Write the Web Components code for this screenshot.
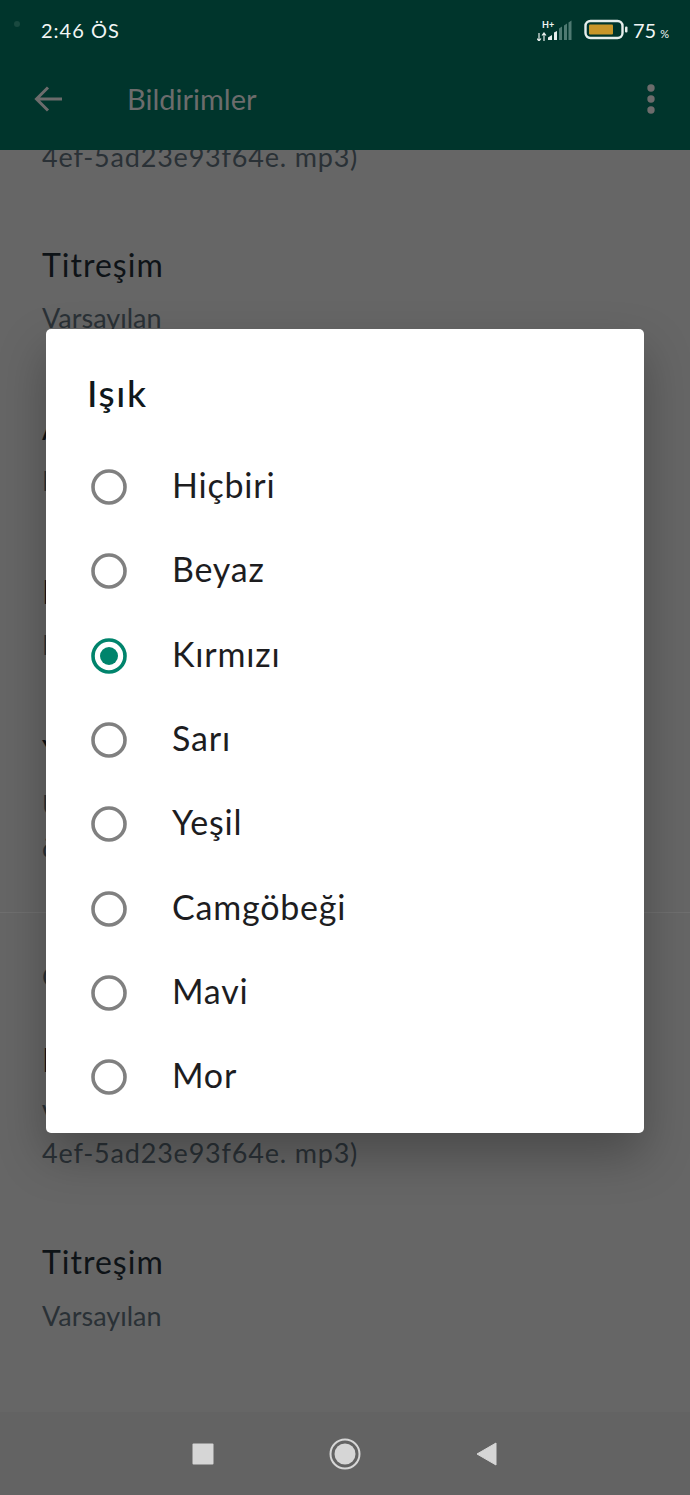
<!DOCTYPE html>
<html lang="tr">
<head>
<meta charset="utf-8">
<title>Bildirimler</title>
<style>
html, body { margin: 0; padding: 0; }
body { width: 690px; height: 1495px; overflow: hidden; position: relative; display: flex; flex-direction: column; background: #666; font-family: "Lato", "Noto Sans", sans-serif; }
</style>
</head>
<body>
<top-bar title-text="Bildirimler"></top-bar>
<settings-list>
    <setting-row clip wide summary="4ef-5ad23e93f64e. mp3)"></setting-row>
    <setting-row gap="67" name="Titreşim" summary="Varsayılan"></setting-row>
    <setting-row gap="69" name="Açılır" summary="Bildirim"></setting-row>
    <setting-row gap="70" name="Işık" summary="Beyaz"></setting-row>
    <setting-row gap="66" name="Yüksek" summary="Üst"></setting-row>
    <setting-row gap="5" summary="önizleme"></setting-row>
    <list-divider></list-divider>
    <setting-row gap="45" summary="Gruplar"></setting-row>
    <setting-row gap="42" sumgap="14" name="Bildirim" summary="Varsayılan"></setting-row>
    <setting-row wide summary="4ef-5ad23e93f64e. mp3)"></setting-row>
    <setting-row gap="68" sumgap="13" name="Titreşim" summary="Varsayılan"></setting-row>
</settings-list>
<nav-bar></nav-bar>
<radio-dialog heading="Işık">
    <radio-option>Hiçbiri</radio-option>
    <radio-option>Beyaz</radio-option>
    <radio-option checked>Kırmızı</radio-option>
    <radio-option>Sarı</radio-option>
    <radio-option>Yeşil</radio-option>
    <radio-option>Camgöbeği</radio-option>
    <radio-option>Mavi</radio-option>
    <radio-option>Mor</radio-option>
</radio-dialog>

<script>
// --- Header: status bar + toolbar ---
class TopBar extends HTMLElement {
    constructor() { super(); this.attachShadow({ mode: 'open' }); }
    connectedCallback() {
        this.shadowRoot.innerHTML = `
            <style>
                :host { display: block; flex: none; height: 150px; background: #00352c; }
                .status { height: 62px; display: flex; align-items: center; padding: 0 21px 2px 14px; box-sizing: border-box; color: #f2f6f5; }
                .dot { width: 6px; height: 6px; border-radius: 50%; background: #19493f; margin-top: -13px; }
                .time { margin-left: 21px; font-size: 20px; letter-spacing: 1px; }
                .right { margin-left: auto; display: flex; align-items: center; }
                .net { position: relative; width: 38px; height: 22px; }
                .net span { position: absolute; left: 5px; top: 1px; font-size: 9px; line-height: 10px; font-weight: 700; }
                .pct { font-size: 20px; margin-left: 5px; }
                .pct small { font-size: 11px; margin-left: 4px; }
                .tool { height: 88px; display: flex; align-items: center; padding-left: 34px; color: #6c6c6c; box-sizing: border-box; padding-bottom: 15px; }
                .title { font-size: 29px; margin-left: 63px; }
                .more { margin-left: auto; margin-right: 35px; }
            </style>
            <div class="status">
                <span class="dot"></span>
                <span class="time">2:46 ÖS</span>
                <div class="right">
                    <div class="net">
                        <span>H+</span>
                        <svg width="38" height="22" viewBox="0 0 38 22">
                            <path d="M2 14v8M0 19.5l2 2.5 2-2.5M7 22v-8M5 16.5l2-2.5 2 2.500" stroke="#e8efed" stroke-width="1.2" fill="none"/>
                            <path d="M11 21v-2.5l4-2.5v5zM17 21v-7.5l3-1.5v9z" fill="#e8efed"/>
                            <path d="M22 21V9.500l3-2v13.500zM27 21V6.500l3-2V21zM31.500 21V3.500l3-2V21z" fill="#4f7a72"/>
                        </svg>
                    </div>
                    <svg width="44" height="22" viewBox="0 0 44 22" style="margin-left:9px">
                        <rect x="1.500" y="2" width="37" height="17" rx="5" fill="none" stroke="#e6eeec" stroke-width="2.400"/>
                        <rect x="5" y="5.500" width="24" height="10" rx="1" fill="#c9962a"/>
                        <rect x="41" y="7.500" width="2.500" height="6" rx="1" fill="#e6eeec"/>
                    </svg>
                    <span class="pct">75<small>%</small></span>
                </div>
            </div>
            <div class="tool">
                <svg width="30" height="28" viewBox="0 0 30 28">
                    <path d="M28 14H3M14 2.500 2.500 14 14 25.500" fill="none" stroke="#6c6c6c" stroke-width="3"/>
                </svg>
                <span class="title">${this.getAttribute('title-text')}</span>
                <svg class="more" width="8" height="30" viewBox="0 0 8 30">
                    <circle cx="4" cy="4" r="3.700" fill="#6c6c6c"/>
                    <circle cx="4" cy="15" r="3.700" fill="#6c6c6c"/>
                    <circle cx="4" cy="26" r="3.700" fill="#6c6c6c"/>
                </svg>
            </div>`;
    }
}
customElements.define('top-bar', TopBar);

// --- Dimmed list behind the dialog ---
class SettingsList extends HTMLElement {
    constructor() { super(); this.attachShadow({ mode: 'open' }); }
    connectedCallback() {
        this.shadowRoot.innerHTML = `
            <style>
                :host { display: block; flex: 1; min-height: 0; overflow: hidden; background: #666; }
            </style>
            <slot></slot>`;
    }
}
customElements.define('settings-list', SettingsList);

class SettingRow extends HTMLElement {
    constructor() { super(); this.attachShadow({ mode: 'open' }); }
    connectedCallback() {
        const name = this.getAttribute('name');
        const gap = this.getAttribute('gap') || 0;
        const sumgap = this.getAttribute('sumgap') || 12;
        this.shadowRoot.innerHTML = `
            <style>
                :host { display: block; padding: ${gap}px 42px 0 42px; }
                :host([clip]) { margin-top: -12px; }
                .name { font-size: 32px; line-height: 44px; letter-spacing: 1px; color: #0e1317; margin-bottom: ${sumgap}px; }
                .sum { font-size: 27px; line-height: 38px; color: #2a3136; }
                :host([wide]) .sum { letter-spacing: .8px; }
            </style>
            ${name ? `<div class="name">${name}</div>` : ''}
            <div class="sum">${this.getAttribute('summary')}</div>`;
    }
}
customElements.define('setting-row', SettingRow);

class ListDivider extends HTMLElement {
    constructor() { super(); this.attachShadow({ mode: 'open' }); }
    connectedCallback() {
        this.shadowRoot.innerHTML = `<style>:host { display: block; height: 1px; margin-top: 45px; background: #6f6f6f; }</style>`;
    }
}
customElements.define('list-divider', ListDivider);

// --- Android navigation bar ---
class NavBar extends HTMLElement {
    constructor() { super(); this.attachShadow({ mode: 'open' }); }
    connectedCallback() {
        this.shadowRoot.innerHTML = `
            <style>
                :host { display: flex; flex: none; height: 83px; background: #636363; align-items: center; justify-content: center; gap: 115px; padding-right: 2px; }
                svg { display: block; }
            </style>
            <svg width="22" height="22" viewBox="0 0 22 22"><rect x="0.500" y="0.500" width="21" height="21" rx="1" fill="#d6d6d6"/></svg>
            <svg width="32" height="32" viewBox="0 0 32 32">
                <circle cx="16" cy="16" r="14.500" fill="none" stroke="#d6d6d6" stroke-width="2"/>
                <circle cx="16" cy="16" r="10.500" fill="#d6d6d6"/>
            </svg>
            <svg width="21" height="24" viewBox="0 0 21 24"><path d="M20 1v22L1 12z" fill="#d6d6d6" stroke="#d6d6d6" stroke-linejoin="round"/></svg>`;
    }
}
customElements.define('nav-bar', NavBar);

// --- Dialog ---
class RadioDialog extends HTMLElement {
    constructor() { super(); this.attachShadow({ mode: 'open' }); }
    connectedCallback() {
        this.shadowRoot.innerHTML = `
            <style>
                :host { position: absolute; left: 46px; top: 329px; width: 598px; height: 804px; box-sizing: border-box; background: #fff; border-radius: 5px; box-shadow: 0 22px 48px rgba(0,0,0,.28); }
                h2 { margin: 0; padding: 41px 0 0 41px; height: 116px; box-sizing: border-box; font-size: 37px; line-height: 46px; font-weight: 500; letter-spacing: 1.6px; color: #10181c; }
            </style>
            <h2>${this.getAttribute('heading')}</h2>
            <slot></slot>`;
    }
}
customElements.define('radio-dialog', RadioDialog);

class RadioOption extends HTMLElement {
    constructor() { super(); this.attachShadow({ mode: 'open' }); }
    connectedCallback() {
        const on = this.hasAttribute('checked');
        const colour = on ? '#00846c' : '#808080';
        this.shadowRoot.innerHTML = `
            <style>
                :host { display: flex; align-items: center; height: 84.300px; padding-left: 45px; font-size: 34px; letter-spacing: .8px; color: #1d1d1f; }
                svg { display: block; flex: none; }
                span { margin: -5px 0 0 45px; }
            </style>
            <svg width="36" height="36" viewBox="0 0 36 36">
                <circle cx="18" cy="18" r="16" fill="none" stroke="${colour}" stroke-width="3.600"/>
                ${on ? `<circle cx="18" cy="18" r="9" fill="${colour}"/>` : ''}
            </svg>
            <span><slot></slot></span>`;
    }
}
customElements.define('radio-option', RadioOption);
</script>
</body>
</html>
